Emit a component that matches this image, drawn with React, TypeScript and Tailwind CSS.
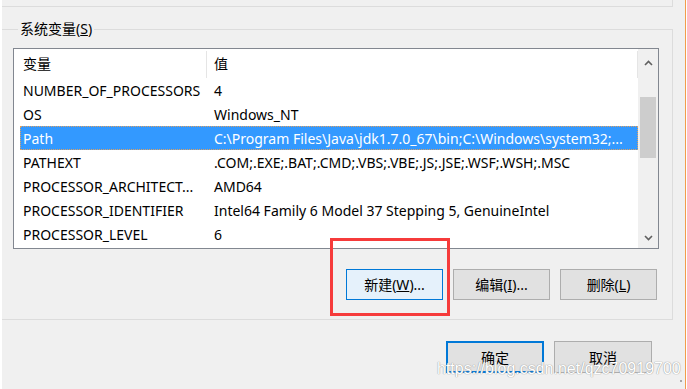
import React from "react";

const rows: [string, string][] = [
  ["NUMBER_OF_PROCESSORS", "4"],
  ["OS", "Windows_NT"],
  ["Path", "C:\\Program Files\\Java\\jdk1.7.0_67\\bin;C:\\Windows\\system32;..."],
  ["PATHEXT", ".COM;.EXE;.BAT;.CMD;.VBS;.VBE;.JS;.JSE;.WSF;.WSH;.MSC"],
  ["PROCESSOR_ARCHITECT...", "AMD64"],
  ["PROCESSOR_IDENTIFIER", "Intel64 Family 6 Model 37 Stepping 5, GenuineIntel"],
  ["PROCESSOR_LEVEL", "6"],
];

function Chevron({ up }: { up?: boolean }) {
  return (
    <svg width="9" height="6" viewBox="0 0 9 6">
      <path
        d={up ? "M1 5 L4.5 1.5 L8 5" : "M1 1 L4.5 4.5 L8 1"}
        fill="none"
        stroke="#606060"
        strokeWidth="1.6"
      />
    </svg>
  );
}

export default function App() {
  return (
    <div className="w-[687px] h-[389px] bg-[#f0f0f0] flex relative overflow-hidden text-[14px] text-black font-['Noto_Sans','Noto_Sans_CJK_SC',sans-serif]">
      <div className="w-[2px] bg-white" />
      <div className="flex flex-col w-[683px]">
        <div className="h-[7px] w-[671px] border-b border-r border-[#dcdcdc]" />
        <fieldset className="mt-[12px] w-[671px] border border-l-0 border-[#dcdcdc] pl-[11px]">
          <legend className="ml-[5px] px-[2px] leading-[20px]">
            系统变量(<span className="underline">S</span>)
          </legend>
          <div className="mt-[9px] w-[646px] h-[201px] border border-[#828790] bg-white flex">
            <div className="flex-1 flex flex-col">
              <div className="h-[29px] flex items-stretch pl-[6px]">
                <div className="w-[186px] flex items-center pl-[3px]">变量</div>
                <div className="w-px bg-[#e5e5e5] mt-[2px]" />
                <div className="flex-1 flex items-center pl-[7px]">值</div>
                <div className="w-px bg-[#e5e5e5] mt-[2px]" />
              </div>
              {rows.map(([k, v], i) => {
                const sel = i === 2;
                return (
                  <div key={k} className="h-[24px] pl-[6px] flex">
                    <div
                      className={
                        "flex-1 flex items-center whitespace-nowrap overflow-hidden " +
                        (sel
                          ? "bg-[#3399ff] text-white outline outline-1 outline-dotted outline-[#e0a060] -outline-offset-1"
                          : "")
                      }
                    >
                      <div className="w-[191px] pl-[3px] shrink-0">{k}</div>
                      <div className="pl-[3px]">{v}</div>
                    </div>
                  </div>
                );
              })}
            </div>
            <div className="w-[20px] bg-[#f0f0f0] flex flex-col">
              <div className="h-[28px] flex items-center justify-center">
                <Chevron up />
              </div>
              <div className="flex-1">
                <div className="mt-[20px] mx-[2px] h-[61px] bg-[#cdcdcd]" />
              </div>
              <div className="h-[20px] flex items-center justify-center">
                <Chevron />
              </div>
            </div>
          </div>
          <div className="mt-[20px] mb-[19px] pr-[15px] flex justify-end gap-[10px]">
            <div className="w-[97px] h-[31px] flex items-center justify-center border border-[#0078d7] bg-[#e5f1fb]">
              新建(<span className="underline">W</span>)...
            </div>
            <div className="w-[97px] h-[31px] flex items-center justify-center border border-[#adadad] bg-[#e1e1e1]">
              编辑(<span className="underline">I</span>)...
            </div>
            <div className="w-[97px] h-[31px] flex items-center justify-center border border-[#adadad] bg-[#e1e1e1]">
              删除(<span className="underline">L</span>)
            </div>
          </div>
        </fieldset>
        <div className="mt-[21px] pr-[33px] flex justify-end gap-[10px]">
          <div className="w-[98px] h-[32px] flex items-center justify-center border-2 border-[#0078d7] bg-[#e1e1e1]">
            确定
          </div>
          <div className="w-[98px] h-[32px] flex items-center justify-center border border-[#adadad] bg-[#e1e1e1]">
            取消
          </div>
        </div>
      </div>
      <div className="w-px bg-[#f39c4a]" />
      <div className="w-px bg-white" />

      <div className="absolute left-[330px] top-[238px] w-[120px] h-[78px] border-[3px] border-[#f63b3b]" />
      <div className="absolute left-[437px] top-[361px] leading-none text-[16px] text-white font-['Liberation_Sans',sans-serif] [text-shadow:0_0_1px_#9a9a9a,0_0_1px_#9a9a9a]">
        https://blog.csdn.net/qzc70919700
      </div>
      <div className="absolute left-[680px] top-[380px] w-[2px] h-[2px] bg-[#a8a8a8]" />
    </div>
  );
}
